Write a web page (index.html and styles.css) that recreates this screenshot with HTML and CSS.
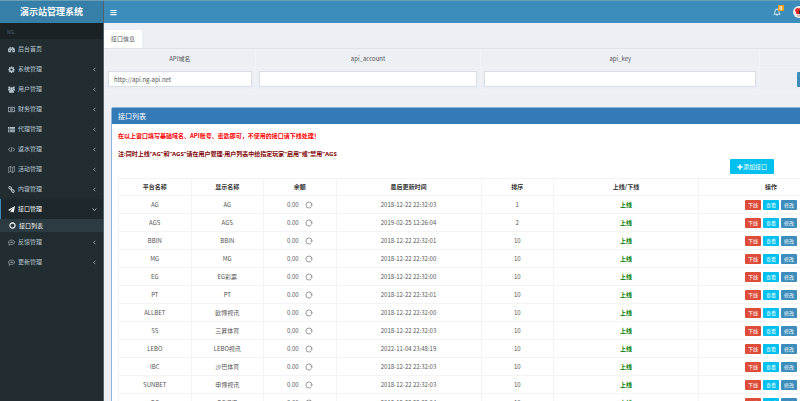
FILE: index.html
```html
<!DOCTYPE html>
<html lang="zh-CN">
<head>
    <meta charset="UTF-8">
    <meta name="viewport" content="width=device-width, initial-scale=1.0">
    <title>演示站管理系统</title>
    <link rel="stylesheet" href="styles.css">
</head>
<body>
    <svg class="sprite" aria-hidden="true">
        <symbol id="i-bars" viewBox="0 0 16 16"><path d="M1 2h14v2.4H1zM1 6.8h14v2.4H1zM1 11.6h14V14H1z"/></symbol>
        <symbol id="i-bell" viewBox="0 0 16 16"><path fill="none" stroke="currentColor" stroke-width="1.5" d="M8 1v1.5M1.5 12.5C3.500 10.500 4 9 4 6.500a4 4 0 0 1 8 0c0 2.500.5 4 2.500 6zM6.300 13a1.700 1.700 0 0 0 3.400 0"/></symbol>
        <symbol id="i-dashboard" viewBox="0 0 16 16"><path fill-rule="evenodd" d="M8 2a8 8 0 0 0-8 8c0 1.600.4 3 1.200 4h13.600c.8-1 1.200-2.400 1.200-4a8 8 0 0 0-8-8zM2 9h2v2H2zM3.500 5.500h2v2h-2zM7 3.500h2v2H7zM12 9h2v2h-2zM9.500 6l1.200.4-1.200 4a2 2 0 1 1-1.400-.4z"/></symbol>
        <symbol id="i-cog" viewBox="0 0 16 16"><path fill-rule="evenodd" d="M6.800 1h2.400l.4 2 1.200.5 1.700-1.200 1.700 1.700-1.200 1.700.5 1.200 2 .4v2.400l-2 .4-.5 1.200 1.200 1.700-1.700 1.700-1.700-1.200-1.200.5-.4 2H6.800l-.4-2-1.200-.5-1.700 1.200L1.800 13 3 11.300l-.5-1.200-2-.4V7.300l2-.4L3 5.700 1.800 4l1.700-1.700 1.700 1.200L6.400 3zM8 5.500a2.700 2.700 0 1 0 0 5.400 2.700 2.700 0 0 0 0-5.400z"/></symbol>
        <symbol id="i-users" viewBox="0 0 16 16"><circle cx="8" cy="6" r="3.400"/><circle cx="3" cy="3.500" r="2.600"/><circle cx="13" cy="3.500" r="2.600"/><path d="M2.500 15.500c-.5-4.500 1-6.500 3-6.500h5c2 0 3.500 2 3 6.500zM0 10c0-2.500.6-4.200 2-4.200h2.400c0 1.400.4 2 .8 2.700-1 .2-1.800.8-2.400 1.500zM16 10c0-2.500-.6-4.200-2-4.200h-2.400c0 1.400-.4 2-.8 2.700 1 .2 1.800.8 2.400 1.500z"/></symbol>
        <symbol id="i-money" viewBox="0 0 16 16"><path fill="none" stroke="currentColor" stroke-width="1.500" d="M.8 3h14.400v10H.8zM3 3c0 1.300-.9 2.200-2.200 2.200M13 3c0 1.300.9 2.200 2.200 2.200M3 13c0-1.300-.9-2.200-2.200-2.200M13 13c0-1.300.9-2.200 2.200-2.200"/><ellipse cx="8" cy="8" rx="2.400" ry="3.200" fill="none" stroke="currentColor" stroke-width="1.400"/><path d="M7.400 6h1.200v4H7.400z"/></symbol>
        <symbol id="i-list" viewBox="0 0 16 16"><path d="M0 2h3v2.400H0zM4 2h12v2.400H4zM0 5.300h3v2.400H0zM4 5.300h12v2.400H4zM0 8.600h3V11H0zM4 8.600h12V11H4zM0 12h3v2.400H0zM4 12h12v2.400H4z"/></symbol>
        <symbol id="i-code" viewBox="0 0 16 16"><path fill="none" stroke="currentColor" stroke-width="1.600" d="M4.800 3.500L1 8l3.800 4.500M11.200 3.500L15 8l-3.800 4.500M9.300 2.500l-2.600 11"/></symbol>
        <symbol id="i-map" viewBox="0 0 16 16"><path fill="none" stroke="currentColor" stroke-width="1.300" d="M.8 3.500L5.500 1.200l5 2.300 4.700-2.300v11.300l-4.700 2.300-5-2.300-4.700 2.300zM5.500 1.200v11.300M10.500 3.500v11.300"/></symbol>
        <symbol id="i-link" viewBox="0 0 16 16"><rect x="1.500" y="2" width="7" height="4.600" rx="2.200" transform="rotate(45 5 4.300)" fill="none" stroke="currentColor" stroke-width="2.200"/><rect x="7.500" y="9" width="7" height="4.600" rx="2.200" transform="rotate(45 11 11.300)" fill="none" stroke="currentColor" stroke-width="2.200"/><path stroke="currentColor" stroke-width="2.200" d="M6 6l4 4"/></symbol>
        <symbol id="i-plane" viewBox="0 0 16 16"><path d="M16 0L0 9.200l4 1.700L13 3.500 6 11.700V16l2.400-3.200L13 14.600z"/></symbol>
        <symbol id="i-circle" viewBox="0 0 16 16"><circle cx="8" cy="8" r="6" fill="none" stroke="currentColor" stroke-width="2.400"/></symbol>
        <symbol id="i-comment" viewBox="0 0 16 16"><path fill="none" stroke="currentColor" stroke-width="1.400" d="M8 2.500c4 0 7 2.200 7 5s-3 5-7 5c-.8 0-1.500-.1-2.200-.3C4.600 13.400 3.300 14 2 14.200c.7-.8 1.100-1.700 1.200-2.900C1.800 10.400 1 9 1 7.500c0-2.800 3-5 7-5z"/><path d="M4 6.500h2v2H4zM7 6.500h2v2H7zM10 6.500h2v2h-2z"/></symbol>
        <symbol id="i-left" viewBox="0 0 16 16"><path fill="none" stroke="currentColor" stroke-width="2.200" d="M10.500 2.500L5.500 8l5 5.500"/></symbol>
        <symbol id="i-down" viewBox="0 0 16 16"><path fill="none" stroke="currentColor" stroke-width="2.200" d="M2 5l6 6 6-6"/></symbol>
        <symbol id="i-plus" viewBox="0 0 16 16"><path d="M6 1h4v5h5v4h-5v5H6v-5H1V6h5z"/></symbol>
        <symbol id="i-refresh" viewBox="0 0 16 16"><path fill="none" stroke="currentColor" stroke-width="2" d="M13.800 8A6 6 0 1 0 8 14c2.400 0 4.200-1.200 5.200-3"/><path d="M10.500 7H16l-2.500 3.500z"/></symbol>
    </svg>

    <div class="wrapper">
        <aside class="sidebar">
            <a class="logo" href="#">演示站管理系统</a>
            <div class="user-panel">NG.</div>
            <ul class="menu">
                <li><a href="#"><svg class="icon"><use href="#i-dashboard"/></svg>后台首页</a></li>
                <li><a href="#"><svg class="icon"><use href="#i-cog"/></svg>系统管理<svg class="arrow"><use href="#i-left"/></svg></a></li>
                <li><a href="#"><svg class="icon"><use href="#i-users"/></svg>用户管理<svg class="arrow"><use href="#i-left"/></svg></a></li>
                <li><a href="#"><svg class="icon"><use href="#i-money"/></svg>财务管理<svg class="arrow"><use href="#i-left"/></svg></a></li>
                <li><a href="#"><svg class="icon"><use href="#i-list"/></svg>代理管理<svg class="arrow"><use href="#i-left"/></svg></a></li>
                <li><a href="#"><svg class="icon"><use href="#i-code"/></svg>返水管理<svg class="arrow"><use href="#i-left"/></svg></a></li>
                <li><a href="#"><svg class="icon"><use href="#i-map"/></svg>活动管理<svg class="arrow"><use href="#i-left"/></svg></a></li>
                <li><a href="#"><svg class="icon"><use href="#i-link"/></svg>内容管理<svg class="arrow"><use href="#i-left"/></svg></a></li>
                <li class="active">
                    <a href="#"><svg class="icon"><use href="#i-plane"/></svg>接口管理<svg class="arrow"><use href="#i-down"/></svg></a>
                    <ul class="submenu">
                        <li><a href="#"><svg class="icon"><use href="#i-circle"/></svg>接口列表</a></li>
                    </ul>
                </li>
                <li><a href="#"><svg class="icon"><use href="#i-comment"/></svg>反馈管理<svg class="arrow"><use href="#i-left"/></svg></a></li>
                <li><a href="#"><svg class="icon"><use href="#i-comment"/></svg>更新管理<svg class="arrow"><use href="#i-left"/></svg></a></li>
            </ul>
        </aside>

        <div class="main">
            <header class="navbar">
                <button class="nav-btn" type="button" aria-label="菜单"><svg class="icon"><use href="#i-bars"/></svg></button>
                <a class="bell" href="#" aria-label="通知"><svg class="bell-icon"><use href="#i-bell"/></svg><span class="badge">0</span></a>
                <a class="avatar" href="#" aria-label="用户">
                    <svg viewBox="0 0 24 24"><circle cx="12" cy="12" r="12" fill="#f3eeee"/><path fill="#e02a2a" d="M4 9c2-6 6-6 8-4 2-2 6-1 7 4l-2 7H7z"/><path fill="#333" d="M12 9h3v7h-3z"/><path fill="#c9b9b9" d="M7 17h10l-2 4H9z"/></svg>
                </a>
            </header>

            <ul class="tabs">
                <li><a href="#">接口信息</a></li>
            </ul>

            <form>
                <table class="api-table">
                    <colgroup><col class="w20"><col class="w30"><col class="w37"><col></colgroup>
                    <tr>
                        <th><label for="domain">API域名</label></th>
                        <th><label for="account">api_account</label></th>
                        <th><label for="key">api_key</label></th>
                        <th></th>
                    </tr>
                    <tr>
                        <td><input type="text" id="domain" value="http://api.ng-api.net"></td>
                        <td><input type="text" id="account"></td>
                        <td><input type="text" id="key"></td>
                        <td><button class="btn btn-primary" type="submit" aria-label="保存"></button></td>
                    </tr>
                </table>
            </form>

            <section class="panel">
                <h2 class="panel-title">接口列表</h2>
                <div class="panel-body">
                    <p class="tip tip-red">在以上窗口填写基础域名、API账号、密匙即可，不使用的接口请下线处理！</p>
                    <p class="tip tip-maroon">注:同时上线“AG”和“AGS”请在用户管理-用户列表中给指定玩家“启用”或“禁用”AGS</p>
                    <div class="toolbar">
                        <button class="btn btn-info" type="button"><svg class="plus"><use href="#i-plus"/></svg>添加接口</button>
                    </div>
                    <table class="list-table">
                        <colgroup><col class="w10"><col class="w10"><col class="w10"><col class="w20"><col class="w10"><col class="w20"><col class="w20"></colgroup>
                        <thead>
                            <tr><th>平台名称</th><th>显示名称</th><th>余额</th><th>最后更新时间</th><th>排序</th><th>上线/下线</th><th>操作</th></tr>
                        </thead>
                        <tbody id="rows"></tbody>
                    </table>
                </div>
            </section>
        </div>
    </div>

    <script>
        const platforms = [
            ['AG', 'AG', '2018-12-22 22:32:03', 1],
            ['AGS', 'AGS', '2019-02-25 12:26:04', 2],
            ['BBIN', 'BBIN', '2018-12-22 22:32:01', 10],
            ['MG', 'MG', '2018-12-22 22:32:00', 10],
            ['EG', 'EG彩票', '2018-12-22 22:32:00', 10],
            ['PT', 'PT', '2018-12-22 22:32:01', 10],
            ['ALLBET', '欧博视讯', '2018-12-22 22:32:00', 10],
            ['SS', '三昇体育', '2018-12-22 22:32:03', 10],
            ['LEBO', 'LEBO视讯', '2022-11-04 23:48:19', 10],
            ['IBC', '沙巴体育', '2018-12-22 22:32:03', 10],
            ['SUNBET', '申博视讯', '2018-12-22 22:32:03', 10],
            ['OG', 'OG视讯', '2018-12-22 22:32:04', 10]
        ];

        document.getElementById('rows').innerHTML = platforms.map(function(p) {
            return `<tr>
                <td>${p[0]}</td>
                <td>${p[1]}</td>
                <td><span class="balance">0.00<button class="refresh" type="button" aria-label="刷新"><svg><use href="#i-refresh"/></svg></button></span></td>
                <td>${p[2]}</td>
                <td>${p[3]}</td>
                <td class="online">上线</td>
                <td><div class="actions">
                    <button class="btn-xs red" type="button">下线</button>
                    <button class="btn-xs cyan" type="button">查看</button>
                    <button class="btn-xs blue" type="button">修改</button>
                </div></td>
            </tr>`;
        }).join('');
    </script>
</body>
</html>
```
FILE: styles.css
```css
* {
    box-sizing: border-box;
}
body {
    margin: 0;
    font-family: "Noto Sans CJK SC", sans-serif;
    font-size: 6px;
    line-height: 10px;
    color: #555;
    background: #ecf0f5;
}
ul {
    list-style: none;
    margin: 0;
    padding: 0;
}
a {
    color: inherit;
    text-decoration: none;
}
button,
input {
    font: inherit;
    color: inherit;
    margin: 0;
}
button {
    border: none;
    padding: 0;
    background: none;
    cursor: pointer;
}
svg {
    display: block;
    fill: currentColor;
    flex: none;
}
.sprite {
    display: none;
}
.wrapper {
    display: flex;
    height: 100vh;
    overflow: hidden;
    border-top: 1px solid #6a9fb8;
}

/* sidebar */
.sidebar {
    flex: none;
    width: 104px;
    background: #222d32;
    color: #b8c7ce;
    border-right: 1px solid #56626a;
}
.logo {
    display: block;
    line-height: 22px;
    font-size: 9px;
    font-weight: bold;
    color: #fff;
    text-align: center;
    background: #367fa9;
}
.user-panel {
    height: 16px;
    padding: 4px 7px;
    font-size: 5px;
    line-height: 9px;
    color: #4b646f;
    background: #1a2226;
}
.menu a {
    display: flex;
    align-items: center;
    height: 20px;
    padding: 0 6px 0 7px;
    border-left: 1px solid transparent;
}
.icon {
    width: 7px;
    height: 7px;
    margin-right: 3px;
}
.arrow {
    width: 5px;
    height: 5px;
    margin-left: auto;
}
.menu .active > a {
    color: #fff;
    background: #1e282c;
    border-left-color: #3c8dbc;
}
.menu .submenu a {
    height: 13px;
    padding-left: 8px;
    color: #fff;
    background: #2c3b41;
}

/* top bar */
.main {
    flex: 1 0 754px;
}
.navbar {
    display: flex;
    align-items: center;
    height: 22px;
    padding: 0 53px 0 6px;
    color: #fff;
    background: #3c8dbc;
}
.bell {
    position: relative;
    margin-left: auto;
    margin-right: 12px;
}
.bell-icon {
    width: 8px;
    height: 8px;
}
.badge {
    position: absolute;
    top: -3px;
    right: -3px;
    width: 6px;
    border-radius: 1px;
    font-size: 5px;
    font-weight: bold;
    line-height: 6px;
    text-align: center;
    background: #f39c12;
}
.avatar svg {
    width: 12px;
    height: 12px;
}

/* api form */
.tabs {
    display: flex;
    margin-top: 7px;
    border-bottom: 1px solid #dfe3e8;
}
.tabs a {
    display: block;
    padding: 0 7px;
    line-height: 18px;
    background: #fff;
    border-radius: 2px 2px 0 0;
}
table {
    width: 100%;
    table-layout: fixed;
    border-collapse: collapse;
    text-align: center;
}
.w10 { width: 10%; }
.w20 { width: 20%; }
.w30 { width: 30%; }
.w37 { width: 37%; }
.api-table {
    margin-top: 1px;
}
.api-table th,
.api-table td {
    border: 1px solid #f1f3f6;
    padding: 3px;
}
.api-table th {
    font-weight: normal;
}
.api-table input {
    display: block;
    width: 100%;
    height: 16px;
    padding: 0 5px;
    border: 1px solid #d9dee6;
    border-radius: 0;
    background: #fff;
}
.btn {
    display: flex;
    align-items: center;
    justify-content: center;
    height: 15px;
    border-radius: 1px;
    color: #fff;
}
.btn-primary {
    width: 24px;
    margin: 0 auto;
    background: #3c8dbc;
}
.btn-info {
    padding: 0 7px;
    background: #00c0ef;
}
.plus {
    width: 6px;
    height: 6px;
}

/* list panel */
.panel {
    margin: 16px 7px 0;
    border: 1px solid #8fb4d6;
    border-radius: 2px;
    background: #fff;
}
.panel-title {
    margin: 0;
    padding: 0 6px;
    font-size: 7px;
    font-weight: normal;
    line-height: 16px;
    color: #fff;
    background: #337ab7;
}
.panel-body {
    padding: 7px 6px;
}
.tip {
    margin: 0 0 8px;
    font-weight: bold;
}
.tip-red {
    color: #f00;
}
.tip-maroon {
    margin: 0;
    font-family: "Noto Sans", "Noto Sans CJK SC", sans-serif;
    color: #800000;
}
.toolbar {
    display: flex;
    justify-content: flex-end;
    padding: 0 70px 4px 0;
}
.list-table th,
.list-table td {
    height: 18px;
    padding: 0;
    border: 1px solid #f4f4f4;
}
.list-table th {
    height: 17px;
    color: #333;
}
.balance {
    display: flex;
    align-items: center;
    justify-content: center;
    gap: 6px;
}
.refresh {
    color: #999;
}
.refresh svg {
    width: 8px;
    height: 8px;
}
.list-table .online {
    font-weight: bold;
    color: #008000;
}
.actions {
    display: flex;
    justify-content: center;
    gap: 2px;
}
.btn-xs {
    width: 16px;
    height: 10px;
    border-radius: 1px;
    font-size: 5px;
    line-height: 10px;
    color: #fff;
}
.red { background: #dd4b39; }
.cyan { background: #00c0ef; }
.blue { background: #3c8dbc; }
```
